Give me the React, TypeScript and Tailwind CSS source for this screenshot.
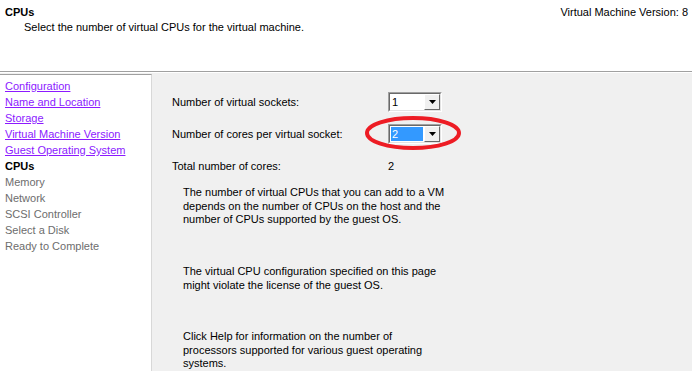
export default function App() {
  const done = [
    "Configuration",
    "Name and Location",
    "Storage",
    "Virtual Machine Version",
    "Guest Operating System",
  ];
  const todo = ["Memory", "Network", "SCSI Controller", "Select a Disk", "Ready to Complete"];

  return (
    <div className="w-[692px] h-[371px] overflow-hidden bg-[#f0f0f0] text-[11px] text-black font-[Tahoma,'Liberation_Sans',Arial,sans-serif]">
      {/* header */}
      <div className="h-[72px] bg-white flex justify-between border-b border-[#a0a0a0]">
        <div>
          <div className="pl-[5px] pt-[5px] leading-[14px] font-bold">CPUs</div>
          <div className="pl-[24px] pt-[1px] leading-[14px]">Select the number of virtual CPUs for the virtual machine.</div>
        </div>
        <div className="pr-[4px] pt-[5px] leading-[14px]">Virtual Machine Version: 8</div>
      </div>
      <div className="h-px bg-white" />

      <div className="flex pt-px h-[298px]">
        {/* steps */}
        <div className="w-[152px] bg-white border-t border-[#a0a0a0] border-r border-r-[#d8d8d8] pl-[5px] pt-[3px]">
          {done.map((s) => (
            <div key={s} className="h-[16px] leading-[16px] text-[#8c1aff] underline">
              {s}
            </div>
          ))}
          <div className="h-[16px] leading-[16px] font-bold">CPUs</div>
          {todo.map((s) => (
            <div key={s} className="h-[16px] leading-[16px] text-[#6d6d6d]">
              {s}
            </div>
          ))}
        </div>

        {/* form */}
        <div className="flex-1 pl-[20px] pt-[12px] relative">
          <div className="h-[32px] flex items-center">
            <div className="w-[216px]">Number of virtual sockets:</div>
            <Combo value="1" />
          </div>
          <div className="h-[32px] flex items-center">
            <div className="w-[216px]">Number of cores per virtual socket:</div>
            <Combo value="2" selected />
          </div>
          <div className="h-[32px] flex items-center">
            <div className="w-[216px]">Total number of cores:</div>
            <div>2</div>
          </div>

          <div className="pl-[11px] pt-[4px] leading-[13.5px]">
            <p>
              The number of virtual CPUs that you can add to a VM
              <br />
              depends on the number of CPUs on the host and the
              <br />
              number of CPUs supported by the guest OS.
            </p>
            <p className="pt-[38.5px]">
              The virtual CPU configuration specified on this page
              <br />
              might violate the license of the guest OS.
            </p>
            <p className="pt-[38px]">
              Click Help for information on the number of
              <br />
              processors supported for various guest operating
              <br />
              systems.
            </p>
          </div>

          {/* red annotation */}
          <svg className="absolute left-[212px] top-[41px]" width="98" height="36" viewBox="0 0 98 36">
            <ellipse cx="49" cy="18" rx="46" ry="15" fill="none" stroke="#ed1c24" strokeWidth="4" />
          </svg>
        </div>
      </div>
    </div>
  );
}

function Combo({ value, selected }: { value: string; selected?: boolean }) {
  return (
    <div className="w-[54px] h-[20px] border border-t-[#a0a0a0] border-l-[#a0a0a0] border-r-white border-b-white">
      <div className="h-full flex bg-white border border-t-[#696969] border-l-[#696969] border-r-[#e3e3e3] border-b-[#e3e3e3]">
        <div className="flex-1 p-px">
          <div
            className={
              selected
                ? "h-full bg-[#3399ff] text-white leading-[14px] pl-[1px]"
                : "h-full leading-[14px] pl-[1px]"
            }
          >
            {value}
          </div>
        </div>
        <div className="w-[16px] h-full bg-[#f0f0f0] border border-t-white border-l-white border-r-[#696969] border-b-[#696969] flex items-center justify-center">
          <svg width="7" height="4" viewBox="0 0 7 4">
            <path d="M0 0H7L3.5 4Z" fill="#000" />
          </svg>
        </div>
      </div>
    </div>
  );
}
